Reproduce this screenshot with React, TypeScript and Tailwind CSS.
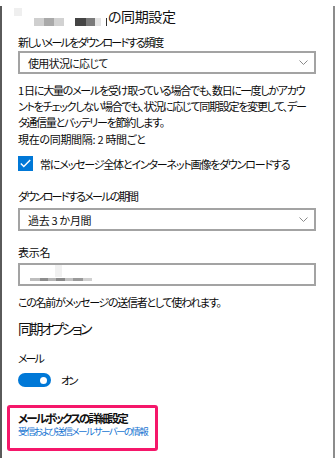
const font = "font-['Noto_Sans_CJK_JP','Noto_Sans',sans-serif] [font-feature-settings:'palt']";

function Chevron() {
  return (
    <svg className="w-[9px] h-[5px]" viewBox="0 0 9 5" fill="none" stroke="#8a8a8a" strokeWidth="1">
      <path d="M0.5 0.5l4 4 4-4" />
    </svg>
  );
}

function Select({ label, track }: { label: string; track: string }) {
  return (
    <div className="flex h-[23px] w-[298px] items-center justify-between border-2 border-[#a3a3a3] pl-[8px] pr-[6px]">
      <span className={`whitespace-nowrap text-[11px] leading-[16px] text-[#111] ${track}`}>{label}</span>
      <Chevron />
    </div>
  );
}

export default function App() {
  return (
    <div className={`h-[458px] w-[336px] overflow-hidden bg-white text-[#0a0a0a] ${font}`}>
      <div className="h-[456px] w-[335px] border-l-2 border-r-2 border-l-[#5a5a5a] border-r-[#8c8c8c] pl-[16px]">
        {/* title with blurred account name */}
        <div className="mt-[6px] flex h-[20px] items-end">
          <div className="relative h-[20px] w-[90px]">
            <span className="absolute left-[-4px] top-[2px] h-[8px] w-[8px] bg-[#efefef]" />
            <span className="absolute left-[16px] top-[12px] flex h-[8px]">
              <span className="w-[10px] bg-[#cfcfcf]" />
              <span className="w-[10px] bg-[#a9a9a9]" />
              <span className="w-[10px] bg-[#d2d2d2]" />
              <span className="w-[11px]" />
              <span className="w-[11px] bg-[#444]" />
              <span className="w-[9px] bg-[#7a7a7a]" />
              <span className="w-[6px] bg-[#e4e4e4]" />
              <span className="ml-[5px] w-[1px] bg-[#333]" />
            </span>
          </div>
          <span className="whitespace-nowrap text-[14px] leading-[20px] tracking-[-0.4px] text-[#111]">の同期設定</span>
        </div>

        <p className="mt-[8px] whitespace-nowrap text-[11px] leading-[16px] tracking-[-1.7px]">新しいメールをダウンロードする頻度</p>
        <div className="mt-[1px]">
          <Select label="使用状況に応じて" track="tracking-[-0.7px]" />
        </div>

        <p className="mt-[8px] whitespace-nowrap text-[11px] leading-[16px] tracking-[-1.25px]">
          1 日に大量のメールを受け取っている場合でも、数日に一度しかアカウ
          <br />
          ントをチェックしない場合でも、状況に応じて同期設定を変更して、デー
          <br />
          タ通信量とバッテリーを節約します。
        </p>
        <p className="mt-[1px] whitespace-nowrap text-[11px] leading-[16px] tracking-[-0.3px]">現在の同期間隔: 2 時間ごと</p>

        <div className="mt-[9px] flex h-[15px] items-center gap-[7px]">
          <span className="flex h-[15px] w-[15px] shrink-0 items-center justify-center bg-[#0078d7]">
            <svg className="h-[9px] w-[11px]" viewBox="0 0 11 9" fill="none" stroke="white" strokeWidth="1.4">
              <path d="M0.8 4.6l3 3 6.4-6.6" />
            </svg>
          </span>
          <span className="whitespace-nowrap text-[11px] leading-[16px] tracking-[-1.2px]">常にメッセージ全体とインターネット画像をダウンロードする</span>
        </div>

        <p className="mt-[17px] whitespace-nowrap text-[11px] leading-[16px] tracking-[-1.7px]">ダウンロードするメールの期間</p>
        <div className="mt-[4px]">
          <Select label="過去 3 か月間" track="tracking-[-0.3px]" />
        </div>

        <p className="mt-[13px] text-[11px] leading-[16px] tracking-[-0.3px]">表示名</p>
        <div className="relative mt-[3px] h-[23px] w-[298px] border-2 border-[#a3a3a3]">
          <span className="absolute left-[35px] top-[0px] h-[12px] w-[7px] bg-[#f1f1f1]" />
          <span className="absolute left-[10px] top-[13px] flex h-[3px]">
            <span className="w-[10px] bg-[#bdbdbd]" />
            <span className="w-[8px] bg-[#8d8d8d]" />
            <span className="w-[8px] bg-[#b5b5b5]" />
            <span className="w-[9px] bg-[#8a8a8a]" />
            <span className="w-[8px] bg-[#c2c2c2]" />
            <span className="w-[10px] bg-[#9a9a9a]" />
            <span className="w-[9px] bg-[#d0d0d0]" />
          </span>
        </div>

        <p className="mt-[8px] whitespace-nowrap text-[11px] leading-[16px] tracking-[-1.3px]">この名前がメッセージの送信者として使われます。</p>

        <h2 className="mt-[8px] whitespace-nowrap text-[14px] leading-[20px] tracking-[-2.5px] text-[#111]">同期オプション</h2>

        <p className="mt-[12px] text-[11px] leading-[16px] tracking-[-2px]">メール</p>
        <div className="mt-[7px] flex h-[14px] items-center gap-[10px]">
          <span className="flex h-[14px] w-[33px] items-center justify-end rounded-full bg-[#0078d7] pr-[4px]">
            <span className="h-[7px] w-[7px] rounded-full bg-white" />
          </span>
          <span className="text-[11px] leading-[16px] tracking-[-2.5px]">オン</span>
        </div>

        <div className="ml-[-11px] mt-[18px] h-[46px] w-[151px] rounded-[3px] border-[3px] border-[#f5176a] pl-[8px] pt-[3px]">
          <p className="whitespace-nowrap text-[11.5px] font-bold leading-[14px] tracking-[-1.9px] text-[#111]">メールボックスの詳細設定</p>
          <p className="whitespace-nowrap text-[9.5px] leading-[12px] tracking-[-1.6px] text-[#1976d2]">受信および送信メール サーバーの情報</p>
        </div>
      </div>
    </div>
  );
}
